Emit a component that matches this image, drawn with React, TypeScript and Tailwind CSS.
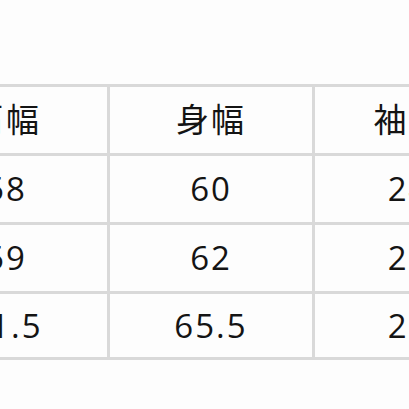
const header = ["肩幅", "身幅", "袖丈"];

const rows = [
  ["58", "60", "24"],
  ["59", "62", "25"],
  ["61.5", "65.5", "26"],
];

function Cell({ text, last, h }: { text: string; last?: boolean; h: string }) {
  return (
    <div
      className={`flex shrink-0 items-center justify-center border-r-[3px] border-[#d9d9d9] ${h} ${
        last ? "w-[190px]" : "w-[205px]"
      }`}
    >
      <span className="tracking-[2px]">{text}</span>
    </div>
  );
}

export default function App() {
  return (
    <div
      className="h-[409px] w-[409px] overflow-hidden bg-[#fdfdfd] text-[33px] text-[#141414]"
      style={{ fontFamily: '"Open Sans", "Noto Sans CJK JP", sans-serif' }}
    >
      <div className="ml-[-95px] mt-[84px] w-[610px] border-t-[3px] border-[#d9d9d9]">
        <div className="flex border-b-[3px] border-[#d9d9d9]">
          {header.map((t, i) => (
            <Cell key={t} text={t} last={i === 2} h="h-[66px]" />
          ))}
        </div>
        {rows.map((r, ri) => (
          <div key={ri} className="flex border-b-[3px] border-[#d9d9d9]">
            {r.map((t, i) => (
              <Cell key={i} text={t} last={i === 2} h={ri === 2 ? "h-[63px]" : "h-[66px]"} />
            ))}
          </div>
        ))}
      </div>
    </div>
  );
}
